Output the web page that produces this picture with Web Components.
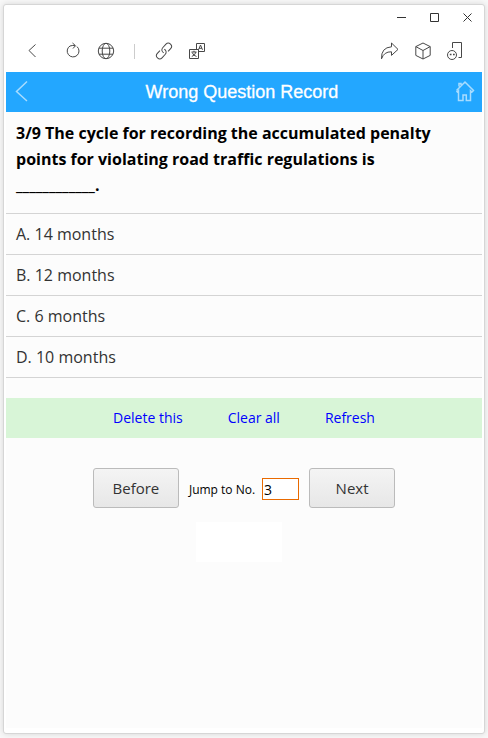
<!DOCTYPE html>
<html lang="en">
<head>
<meta charset="utf-8">
<meta name="viewport" content="width=device-width, initial-scale=1">
<title>Wrong Question Record</title>
<style>
  body { margin: 0; background: #f8f8f8; font-family: "Open Sans", "Noto Sans", sans-serif; color: #333; }
</style>
</head>
<body>
<app-window>
  <window-controls slot="chrome"></window-controls>
  <browser-toolbar slot="chrome"></browser-toolbar>
  <page-header>Wrong Question Record</page-header>
  <quiz-question>3/9 The cycle for recording the accumulated penalty points for violating road traffic regulations is<span slot="blank">____________.</span></quiz-question>
  <answer-option>A. 14 months</answer-option>
  <answer-option>B. 12 months</answer-option>
  <answer-option>C. 6 months</answer-option>
  <answer-option>D. 10 months</answer-option>
  <record-actions></record-actions>
  <question-pager></question-pager>
  <blank-notice></blank-notice>
</app-window>
<script>
const define = (name, html) => {
  const template = document.createElement('template');
  template.innerHTML = html;
  customElements.define(name, class extends HTMLElement {
    constructor() {
      super();
      this.attachShadow({ mode: 'open' }).append(template.content.cloneNode(true));
    }
  });
};

const iconButtonCss = `
  button { border: 0; padding: 0; background: none; color: inherit; width: 33px; display: grid; place-items: center; }
  svg { fill: none; stroke: currentColor; stroke-width: 1; display: block; overflow: visible; }`;

define('app-window', `
  <style>
    :host { display: flex; flex-direction: column; box-sizing: border-box; min-height: 100vh; padding: 4px 3px; }
    .frame { flex: 1; display: flex; flex-direction: column; background: #fff; border: 1px solid #d6d6d6; border-radius: 3px; box-shadow: 0 0 6px #0002; padding: 0 2px 5px; }
    main { flex: 1; background: #fcfcfc; }
  </style>
  <div class="frame"><slot name="chrome"></slot><main><slot></slot></main></div>`);

define('window-controls', `
  <style>
    ${iconButtonCss}
    :host { display: flex; justify-content: flex-end; gap: 3px; height: 25px; color: #333; }
    button { width: 30px; }
  </style>
  <button aria-label="Minimize"><svg width="11" height="11"><path d="M1 5.5h9"/></svg></button>
  <button aria-label="Maximize"><svg width="11" height="11"><path d="M1.500 1.500h8v8h-8z"/></svg></button>
  <button aria-label="Close"><svg width="11" height="11"><path d="M1.500 1.500l8 8m0-8l-8 8"/></svg></button>`);

define('browser-toolbar', `
  <style>
    :host { display: flex; align-items: center; height: 42px; padding: 0 10px 0 9px; color: #484848; }
    ${iconButtonCss}
    .back { margin-right: 8px; }
    .divider { width: 1px; height: 15px; background: #ccc; margin: 0 12px; }
    .spacer { flex: 1; }
  </style>
  <button class="back" aria-label="Back"><svg width="20" height="20"><path d="M13.500 3.500L7 9.500l6.500 6.500"/></svg></button>
  <button aria-label="Reload"><svg width="20" height="20"><path d="M14 5.600A5.900 5.900 0 1 1 7 5Q9 4.200 12 4.600M9.500 2l3 2.700L10 7.500"/></svg></button>
  <button aria-label="Web"><svg width="20" height="20"><circle cx="10" cy="10" r="7.700"/><ellipse cx="10" cy="10" rx="3.800" ry="7.700"/><path d="M3 7.200h14M3 13.200h14"/></svg></button>
  <span class="divider"></span>
  <button aria-label="Copy link"><svg width="20" height="20"><g transform="rotate(-47 10 10)"><path d="M7.500 6.800H3.700a3.200 3.200 0 0 0 0 6.400H8.500a3.200 3.200 0 0 0 3-4.200"/><path d="M12.500 13.200h3.800a3.200 3.200 0 0 0 0-6.400H11.500a3.200 3.200 0 0 0-3 4.200"/></g></svg></button>
  <button aria-label="Translate"><svg width="20" height="20"><path d="M9.500 8V2.500h8v8H12"/><path d="M2.500 8.500h9v9h-9z"/><path d="M11.500 8.800l2-4.800 2 4.800m-3.400-1.500h2.700M4.500 11h5M7 9.700V11m2 0q-1 3.300-4.200 4.500M5.200 11.500q1 3 4.300 4"/></svg></button>
  <span class="spacer"></span>
  <button aria-label="Share"><svg width="20" height="20"><path d="M11.500 2l6.500 6.400-6.500 6v-3.600Q4 10.500 1.500 17.800Q1 6.500 11.500 5.800z"/></svg></button>
  <button aria-label="Package"><svg width="20" height="20"><path d="M10 2l7.200 3.600v8.800L10 18l-7.200-3.600V5.600zM2.800 5.600L10 9.500l7.200-3.900M10 9.500V18"/></svg></button>
  <button aria-label="Mobile chat"><svg width="20" height="20"><path d="M6.500 7V1.500h9v15h-3"/><circle cx="6" cy="14" r="4.500"/><path d="M3.800 13.500h1.700m1.500 0h1.700" stroke-width="1.500"/></svg></button>`);

define('page-header', `
  <style>
    :host { display: grid; grid-template-columns: 40px 1fr 44px; align-items: center; height: 40px; background: #23a7ff; color: #fff; font: 18px "Liberation Sans", Arial, sans-serif; }
    h1 { margin: 0; font: inherit; text-align: center; -webkit-text-stroke: 0.3px; }
    a { color: #a8dcff; }
    a:last-child { justify-self: end; }
    svg { display: block; fill: none; stroke: currentColor; }
  </style>
  <a href="#back" aria-label="Back"><svg width="40" height="40"><path d="M21 9.500L10.500 19.500l10.500 9.500" stroke-width="1.500"/></svg></a>
  <h1><slot></slot></h1>
  <a href="#home" aria-label="Home"><svg width="40" height="40"><path d="M14.500 18.500L23 10l8.500 8.500-1.500 1.500-1.500-1.300V28.500h-4.200v-5.500h-3.300v5.500h-4.500v-9.700l-1.200 1.200-.8-1M17 14.500v-3h2v1.500" stroke-width="1.500"/></svg></a>`);

define('quiz-question', `
  <style>
    :host { display: block; padding: 8px 10px 15px; color: #000; }
    h2 { margin: 0; font-size: 16px; font-weight: 700; line-height: 26px; }
    .blank { display: block; }
  </style>
  <h2><slot></slot> <span class="blank"><slot name="blank"></slot></span></h2>`);

define('answer-option', `
  <style>
    :host { display: block; border-top: 1px solid #d4d4d4; }
    :host(:last-of-type) { border-bottom: 1px solid #d4d4d4; }
    button { display: block; width: 100%; height: 40px; border: 0; padding: 0 10px; background: none; font-family: inherit; font-size: 16px; line-height: 40px; color: #333; text-align: left; }
  </style>
  <button><slot></slot></button>`);

define('record-actions', `
  <style>
    :host { display: flex; justify-content: center; gap: 45px; margin-top: 20px; height: 40px; line-height: 40px; background: #d8f5d7; font-size: 14px; }
    a { color: #00f; text-decoration: none; }
  </style>
  <a href="#delete">Delete this</a><a href="#clear">Clear all</a><a href="#refresh">Refresh</a>`);

define('question-pager', `
  <style>
    :host { display: flex; justify-content: center; align-items: center; gap: 10px; margin-top: 30px; }
    button, input { box-sizing: border-box; font-family: inherit; }
    button { width: 86px; height: 40px; border: 1px solid #bbb; border-radius: 3px; padding: 0; background: linear-gradient(#f4f4f4, #e7e7e7); font-size: 15px; color: #333; }
    label { display: flex; align-items: center; gap: 7px; padding-top: 2px; font-size: 12px; color: #000; }
    input { width: 37px; height: 22px; border: 1px solid #e96a00; padding: 0 1px; background: #fff; font-size: 14px; color: #000; }
  </style>
  <button>Before</button>
  <label>Jump to No. <input value="3" inputmode="numeric"></label>
  <button>Next</button>`);

define('blank-notice', `
  <style>
    :host { display: flex; justify-content: center; padding: 14px 10px 0 0; }
    div { width: 86px; height: 40px; background: #fff; }
  </style>
  <div></div>`);
</script>
</body>
</html>
